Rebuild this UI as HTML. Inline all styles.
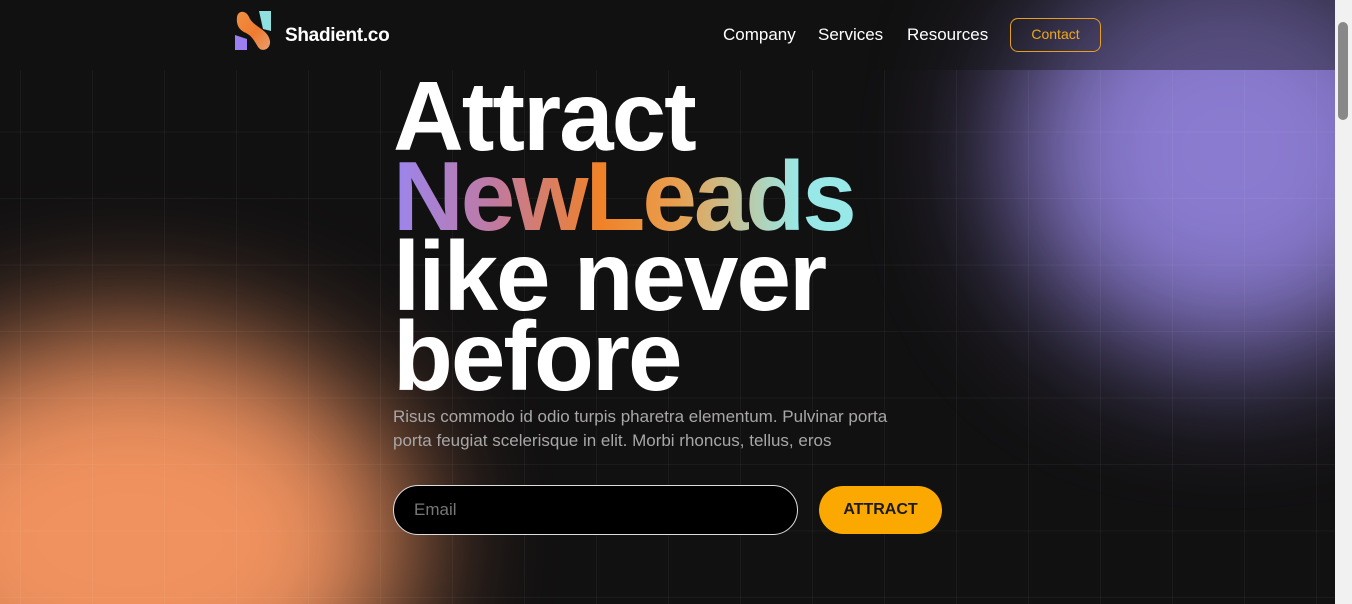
<!DOCTYPE html>
<html><head><meta charset="utf-8"><style>
*{margin:0;padding:0;box-sizing:border-box}
html,body{width:1352px;height:604px;overflow:hidden;background:#121112;font-family:"Liberation Sans",sans-serif}
.page{position:absolute;left:0;top:0;width:1335px;height:604px;overflow:hidden;background:#121112}
.blob{position:absolute;border-radius:50%}
.grid{position:absolute;left:0;top:70px;width:1335px;height:534px;
background-image:linear-gradient(90deg,rgba(255,255,255,.045) 1px,transparent 1px),linear-gradient(0deg,rgba(255,255,255,.045) 1px,transparent 1px);
background-size:72px 66.5px;background-position:20px -4px}
.header{position:absolute;left:0;top:0;width:1335px;height:70px;background:rgba(18,17,18,.4)}
.logo{position:absolute;left:234px;top:9px}
.brand{position:absolute;left:285px;top:25px;color:#fff;font-weight:bold;font-size:19px;letter-spacing:-.3px}
.nav{position:absolute;top:25px;color:#fff;font-size:17px}
.contact{position:absolute;left:1010px;top:18px;width:91px;height:34px;border:1.5px solid #e5a020;border-radius:8px;color:#f0a818;font-size:14px;text-align:center;line-height:31px}
h1{position:absolute;left:393px;top:76px;font-size:98px;line-height:80px;color:#fff;font-weight:bold;letter-spacing:-2px}
.grad{background:linear-gradient(90deg,#9b85f0 0%,#c07aa0 22%,#f08228 45%,#e8a050 62%,#98e8e8 88%);-webkit-background-clip:text;background-clip:text;color:transparent;letter-spacing:-3px}
p{position:absolute;left:393px;top:405px;width:520px;color:#a8a6a6;font-size:17px;line-height:24px}
.email{position:absolute;left:393px;top:485px;width:405px;height:50px;background:#000;border:1.5px solid #ddd;border-radius:25px;color:#777;font-size:17px;line-height:47px;padding-left:20px}
.btn{position:absolute;left:819px;top:486px;width:123px;height:48px;background:#fba800;border-radius:24px;color:#1a1a1a;font-weight:bold;font-size:16px;text-align:center;line-height:48px}
.sb{position:absolute;left:1335px;top:0;width:17px;height:604px;background:#f1f1f1}
.thumb{position:absolute;left:1338px;top:22px;width:10px;height:98px;background:#888;border-radius:5px}
</style></head><body>
<div class="page">
<div class="blob" style="left:1010px;top:-60px;width:440px;height:420px;background:#8a7bd0;filter:blur(65px)"></div>
<div class="blob" style="left:-150px;top:330px;width:560px;height:420px;background:#f0925f;filter:blur(65px)"></div>
<div class="grid"></div>
<div class="header"></div>
<svg class="logo" width="40" height="44" viewBox="0 0 40 44">
<defs><linearGradient id="g" x1="0" y1="0" x2="1" y2="1"><stop offset="0" stop-color="#f09040"/><stop offset=".55" stop-color="#f07a30"/><stop offset="1" stop-color="#e8a070"/></linearGradient></defs>
<path d="M1 26 L1 41 L13 41 L13 30 Z" fill="#9a80f0"/>
<path d="M25 2 L37 2 L37 22 L29 20 Z" fill="#90e0e0"/>
<path d="M3 8 C4 1 12 1 15 8 C19 18 34 20 36 32 C37 40 28 44 24 38 C21 33 18 27 12 24 C5 21 2 16 3 8 Z" fill="url(#g)"/>
</svg>
<div class="brand">Shadient.co</div>
<div class="nav" style="left:723px">Company</div>
<div class="nav" style="left:818px">Services</div>
<div class="nav" style="left:907px">Resources</div>
<div class="contact">Contact</div>
<h1>Attract<br><span class="grad">NewLeads</span><br>like never<br>before</h1>
<p>Risus commodo id odio turpis pharetra elementum. Pulvinar porta porta feugiat scelerisque in elit. Morbi rhoncus, tellus, eros</p>
<div class="email">Email</div>
<div class="btn">ATTRACT</div>
</div>
<div class="sb"></div><div class="thumb"></div>
</body></html>
